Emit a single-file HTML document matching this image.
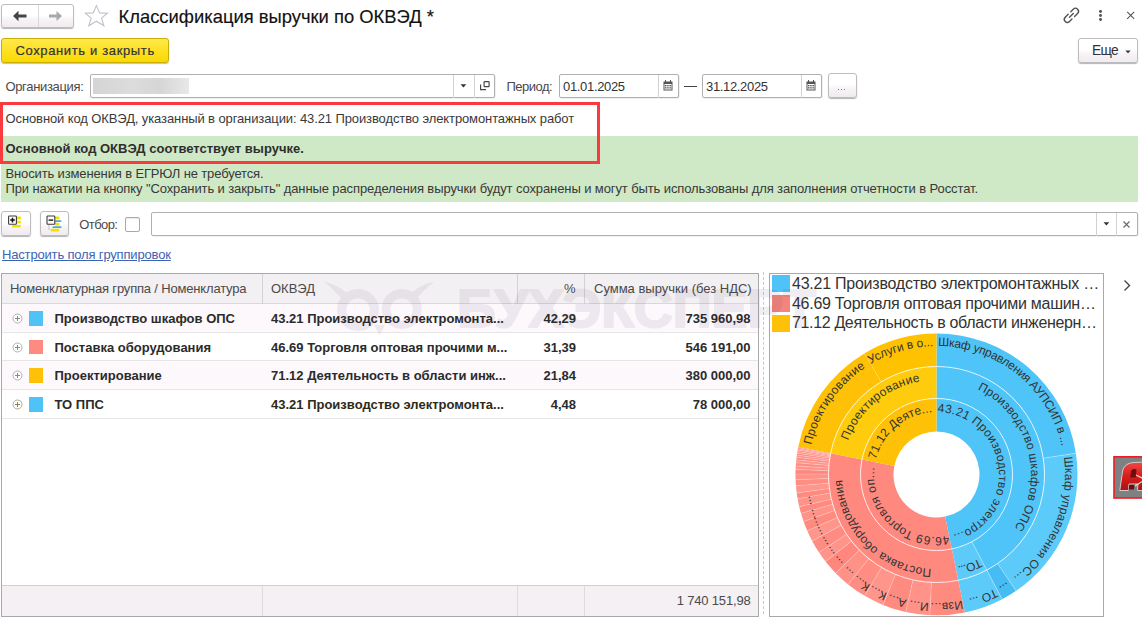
<!DOCTYPE html>
<html><head><meta charset="utf-8">
<style>
*{box-sizing:border-box;margin:0;padding:0}
html,body{width:1142px;height:620px;overflow:hidden;background:#fff;font-family:"Liberation Sans",sans-serif;color:#333;position:relative}
.a{position:absolute}
.btn{position:absolute;border:1px solid #bdbdbd;border-radius:3px;background:linear-gradient(#fff 0%,#fff 45%,#f6f2f6 68%,#efebef 100%);box-shadow:0 1px 1px rgba(0,0,0,.3)}
.inp{position:absolute;border:1px solid #b0b0b0;border-radius:2px;background:#fff;box-shadow:0.5px 0.5px 0.5px rgba(0,0,0,.12)}
.t{position:absolute;white-space:nowrap;font-size:13px;color:#4a4a4a;line-height:1}
.vl{position:absolute;width:1px;background:#d2d2d2}
.hl{position:absolute;height:1px;background:#e0e0e0}
.b{font-weight:bold;color:#2b2b2b}
</style></head><body>

<!-- nav -->
<div class="btn" style="left:1px;top:4px;width:73px;height:23.5px"></div>
<div class="a" style="left:38px;top:5px;width:1px;height:22px;background:#d9d9d9"></div>
<svg class="a" style="left:12px;top:10px" width="16" height="12" viewBox="0 0 16 12"><path d="M1 6 L6.5 0.8 V4.5 H14.5 V7.5 H6.5 V11.2 Z" fill="#444"/></svg>
<svg class="a" style="left:47px;top:10px" width="16" height="12" viewBox="0 0 16 12"><path d="M15 6 L9.5 1 V4.6 H2 V7.4 H9.5 V11 Z" fill="#aaa"/></svg>
<svg class="a" style="left:80px;top:0" width="32" height="32" viewBox="80 0 32 32"><path d="M96.4 5.6 L99.6 12.9 L107.4 13.3 L101.5 18.1 L103.9 25.8 L96.4 21.2 L88.8 25.8 L91.2 18.1 L85.4 13.3 L93.2 12.9 Z" fill="none" stroke="#bcc2ca" stroke-width="1.1" stroke-linejoin="miter"/></svg>
<div class="t" style="left:118.5px;top:8.3px;font-size:18.4px;color:#111;-webkit-text-stroke:0.15px #111">Классификация выручки по ОКВЭД *</div>

<!-- top right icons -->
<svg class="a" style="left:1055px;top:0" width="34" height="30" viewBox="-16.4 -15.4 34 30"><g transform="rotate(-45) scale(0.84)" fill="none" stroke="#505050" stroke-width="1.6" stroke-linecap="round"><path d="M-1.8 -3.6 H-6.8 A3.6 3.6 0 0 0 -6.8 3.6 H-2.6"/><path d="M1.8 3.6 H6.8 A3.6 3.6 0 0 0 6.8 -3.6 H2.6"/><path d="M-3.2 0 H3.2"/></g></svg>
<div class="a" style="left:1099.4px;top:9.8px;width:2.8px;height:2.8px;background:#555;border-radius:50%"></div>
<div class="a" style="left:1099.4px;top:13.8px;width:2.8px;height:2.8px;background:#555;border-radius:50%"></div>
<div class="a" style="left:1099.4px;top:17.9px;width:2.8px;height:2.8px;background:#555;border-radius:50%"></div>
<svg class="a" style="left:1125px;top:10px" width="12" height="12" viewBox="0 0 12 12"><path d="M2.2 1.8 L9.2 8.8 M9.2 1.8 L2.2 8.8" stroke="#555" stroke-width="1.05"/></svg>

<!-- save button -->
<div class="a" style="left:1px;top:38px;width:168px;height:25px;border:1px solid #c9ae05;border-radius:3px;background:linear-gradient(#ffe94a,#fad900);box-shadow:0 1px 1px rgba(0,0,0,.25)"></div>
<div class="t" style="left:15.4px;top:44.3px;font-size:13px;letter-spacing:0.64px;color:#33333d;-webkit-text-stroke:0.2px #33333d">Сохранить и закрыть</div>

<!-- Еще -->
<div class="btn" style="left:1078px;top:37.8px;width:60px;height:25px"></div>
<div class="t" style="left:1092px;top:43.8px;font-size:13.8px;letter-spacing:-0.75px;color:#333">Еще</div>
<svg class="a" style="left:1125px;top:50px" width="6" height="4"><path d="M0.3 0.5 H5.7 L3 3.2 Z" fill="#333"/></svg>

<!-- organization row -->
<div class="t" style="left:5.4px;top:80px;font-size:13px;letter-spacing:-0.32px">Организация:</div>
<div class="inp" style="left:90px;top:74.2px;width:405px;height:24.3px"></div>
<div class="a" style="left:93px;top:78px;width:96px;height:16px;background:linear-gradient(90deg,#d4d4d4,#dcdcdc 40%,#d6d6d6 70%,#e8e8e8)"></div>
<div class="vl" style="left:453px;top:75px;height:23px"></div>
<div class="vl" style="left:474px;top:75px;height:23px"></div>
<svg class="a" style="left:460px;top:84px" width="7" height="4"><path d="M0.5 0.3 H6.3 L3.4 3.4 Z" fill="#333"/></svg>
<svg class="a" style="left:476px;top:76px" width="18" height="18" viewBox="476 76 18 18"><g fill="none" stroke="#444" stroke-width="1.15"><rect x="484.1" y="81.6" width="5" height="5" rx="0.6"/><path d="M480.6 84.6 V89.6 H486"/></g></svg>

<div class="t" style="left:506.4px;top:80px;font-size:13px;letter-spacing:-0.48px">Период:</div>
<div class="inp" style="left:559px;top:74.2px;width:120px;height:24.3px"></div>
<div class="vl" style="left:658px;top:75px;height:23px"></div>
<div class="t" style="left:563.1px;top:80px;font-size:13px;color:#333;letter-spacing:-0.35px">01.01.2025</div>
<svg class="a" style="left:663px;top:80px" width="10" height="11" viewBox="0 0 10 11"><rect x="0.5" y="1.5" width="9" height="9" fill="#555"/><rect x="1.5" y="4" width="7" height="5.5" fill="#fff"/><g fill="#555"><rect x="2" y="5" width="1.5" height="1.3"/><rect x="4.2" y="5" width="1.5" height="1.3"/><rect x="6.4" y="5" width="1.5" height="1.3"/><rect x="2" y="7.2" width="1.5" height="1.3"/><rect x="4.2" y="7.2" width="1.5" height="1.3"/><rect x="6.4" y="7.2" width="1.5" height="1.3"/><rect x="2" y="0" width="1" height="2"/><rect x="7" y="0" width="1" height="2"/></g></svg>
<div class="a" style="left:684px;top:86px;width:13px;height:1.3px;background:#444"></div>
<div class="inp" style="left:702px;top:74.2px;width:120px;height:24.3px"></div>
<div class="vl" style="left:801px;top:75px;height:23px"></div>
<div class="t" style="left:706px;top:80px;font-size:13px;color:#333;letter-spacing:-0.34px">31.12.2025</div>
<svg class="a" style="left:806px;top:80px" width="10" height="11" viewBox="0 0 10 11"><rect x="0.5" y="1.5" width="9" height="9" fill="#555"/><rect x="1.5" y="4" width="7" height="5.5" fill="#fff"/><g fill="#555"><rect x="2" y="5" width="1.5" height="1.3"/><rect x="4.2" y="5" width="1.5" height="1.3"/><rect x="6.4" y="5" width="1.5" height="1.3"/><rect x="2" y="7.2" width="1.5" height="1.3"/><rect x="4.2" y="7.2" width="1.5" height="1.3"/><rect x="6.4" y="7.2" width="1.5" height="1.3"/><rect x="2" y="0" width="1" height="2"/><rect x="7" y="0" width="1" height="2"/></g></svg>
<div class="btn" style="left:828px;top:73.3px;width:29px;height:24.5px"></div>
<div class="a" style="left:837.7px;top:88.8px;width:1.6px;height:1.4px;background:#777"></div><div class="a" style="left:840.8px;top:88.8px;width:1.6px;height:1.4px;background:#777"></div><div class="a" style="left:843.9px;top:88.8px;width:1.6px;height:1.4px;background:#777"></div>

<!-- green info -->
<div class="a" style="left:1px;top:135.5px;width:1137px;height:66px;background:#cfe8c6"></div>
<div class="a" style="left:0px;top:102px;width:600px;height:62px;border:3px solid #f93a3e"></div>
<div class="t" style="left:5.5px;top:111.8px;font-size:13px;color:#3a3a3a;letter-spacing:-0.107px">Основной код ОКВЭД, указанный в организации: 43.21 Производство электромонтажных работ</div>
<div class="t b" style="left:5.5px;top:142.3px;font-size:13px;color:#2e2e2e">Основной код ОКВЭД соответствует выручке.</div>
<div class="t" style="left:5.5px;top:167px;font-size:13px;color:#383838;letter-spacing:-0.135px">Вносить изменения в ЕГРЮЛ не требуется.</div>
<div class="t" style="left:5.5px;top:182.4px;font-size:13px;color:#383838;letter-spacing:-0.104px">При нажатии на кнопку "Сохранить и закрыть" данные распределения выручки будут сохранены и могут быть использованы для заполнения отчетности в Росстат.</div>

<!-- toolbar -->
<div class="btn" style="left:1px;top:211px;width:30px;height:25px"></div>
<svg class="a" style="left:0;top:208px" width="30" height="30" viewBox="0 208 30 30"><g fill="#f2e200"><rect x="16.5" y="216.6" width="4.5" height="2.6" rx="1"/><rect x="16.5" y="220.7" width="4.5" height="2.6" rx="1"/><rect x="12" y="225" width="9" height="2.6" rx="1"/></g><rect x="8.6" y="216" width="7.8" height="8.2" rx="0.8" fill="#fff" stroke="#3a3a3a" stroke-width="1.1"/><path d="M10.2 220.1 H14.8 M12.5 217.8 V222.4" stroke="#111" stroke-width="1.5"/></svg>
<div class="btn" style="left:39.5px;top:211px;width:29.5px;height:25px"></div>
<svg class="a" style="left:38px;top:208px" width="30" height="30" viewBox="38 208 30 30"><g fill="#f2e200"><rect x="55" y="216.6" width="4.5" height="2.6" rx="1"/><rect x="55" y="222.8" width="4.5" height="2.6" rx="1"/><rect x="50.5" y="228.8" width="8.8" height="2.6" rx="1"/></g><g fill="#4aa8e8"><rect x="55" y="220.2" width="6.5" height="1.8" rx="0.8"/><rect x="52.5" y="226.2" width="9" height="1.8" rx="0.8"/></g><path d="M49 224.5 V230" stroke="#999" stroke-width="1" stroke-dasharray="1 1"/><rect x="47" y="216" width="7.8" height="8.2" rx="0.8" fill="#fff" stroke="#3a3a3a" stroke-width="1.1"/><path d="M48.6 220.1 H53.2" stroke="#222" stroke-width="1.5"/></svg>
<div class="t" style="left:79.3px;top:217.5px;font-size:13px;letter-spacing:-0.58px">Отбор:</div>
<div class="a" style="left:124.5px;top:216.5px;width:15px;height:15px;border:1px solid #aaa;border-radius:2px;background:#fff;box-shadow:inset 0 1px 1px rgba(0,0,0,.08)"></div>
<div class="inp" style="left:150.5px;top:211.8px;width:987px;height:24px"></div>
<div class="vl" style="left:1096px;top:213px;height:22.5px"></div>
<div class="vl" style="left:1116px;top:213px;height:22.5px"></div>
<svg class="a" style="left:1103px;top:222px" width="7" height="4"><path d="M0.5 0.3 H6.3 L3.4 3.4 Z" fill="#333"/></svg>
<svg class="a" style="left:1122px;top:219.5px" width="9" height="9" viewBox="0 0 9 9"><path d="M1.5 1.5 L7.5 7.5 M7.5 1.5 L1.5 7.5" stroke="#666" stroke-width="1.1"/></svg>

<div class="t" style="left:2px;top:248.3px;font-size:13px;color:#3c64b4;text-decoration:underline;letter-spacing:-0.17px">Настроить поля группировок</div>

<!-- table -->
<div class="a" style="left:1px;top:273px;width:758px;height:344px;border:1px solid #a9a9a9;background:#fff;overflow:hidden">
  <div class="a" style="left:0;top:0;width:756px;height:29.5px;background:#f3f0f3;border-bottom:1px solid #d8d8d8"></div>
  <div class="a" style="left:0;top:30px;width:756px;height:28.7px;background:#fcf8fc;border-bottom:1px solid #e6e6e6"></div>
  <div class="a" style="left:0;top:58.7px;width:756px;height:28.7px;background:#fff;border-bottom:1px solid #e6e6e6"></div>
  <div class="a" style="left:0;top:87.4px;width:756px;height:28.7px;background:#fcf8fc;border-bottom:1px solid #e6e6e6"></div>
  <div class="a" style="left:0;top:116.1px;width:756px;height:28.7px;background:#fff;border-bottom:1px solid #e6e6e6"></div>
  <div class="a" style="left:0;top:311.3px;width:756px;height:31px;background:#f4f0f4;border-top:1px solid #d0d0d0"></div>
  <div class="vl" style="left:260px;top:0;height:29.5px"></div>
  <div class="vl" style="left:515px;top:0;height:29.5px"></div>
  <div class="vl" style="left:582px;top:0;height:29.5px"></div>
  <div class="vl" style="left:260px;top:312px;height:31px;background:#dcdcdc"></div>
  <div class="vl" style="left:515px;top:312px;height:31px;background:#dcdcdc"></div>
  <div class="vl" style="left:582px;top:312px;height:31px;background:#dcdcdc"></div>
</div>
<!-- watermark -->


<div class="t" style="left:9.9px;top:281.5px;font-size:13px;letter-spacing:-0.175px">Номенклатурная группа / Номенклатура</div>
<div class="t" style="left:271px;top:281.5px;font-size:13px">ОКВЭД</div>
<div class="t" style="left:564px;top:281.5px;font-size:13px">%</div>
<div class="t" style="left:594px;top:281.5px;font-size:13px">Сумма выручки (без НДС)</div>

<!-- rows -->
<svg class="a" style="left:12px;top:313px" width="11" height="11" viewBox="0 0 11 11"><circle cx="5.5" cy="5.5" r="4.5" fill="#fff" stroke="#b0b0b0" stroke-width="1"/><path d="M3 5.5 H8 M5.5 3 V8" stroke="#888" stroke-width="1"/></svg>
<div class="a" style="left:29.2px;top:311px;width:14px;height:14.5px;background:#4fc3f7"></div>
<div class="t b" style="left:54.5px;top:312px;font-size:13px">Производство шкафов ОПС</div>
<div class="t b" style="left:271px;top:312px;font-size:13px">43.21 Производство электромонта...</div>
<div class="t b" style="left:524px;top:312px;width:52px;text-align:right;font-size:13px">42,29</div>
<div class="t b" style="left:600px;top:312px;width:150.5px;text-align:right;font-size:13px">735 960,98</div>

<svg class="a" style="left:12px;top:341.7px" width="11" height="11" viewBox="0 0 11 11"><circle cx="5.5" cy="5.5" r="4.5" fill="#fff" stroke="#b0b0b0" stroke-width="1"/><path d="M3 5.5 H8 M5.5 3 V8" stroke="#888" stroke-width="1"/></svg>
<div class="a" style="left:29.2px;top:339.7px;width:14px;height:14.5px;background:#ff8a80"></div>
<div class="t b" style="left:54.5px;top:340.7px;font-size:13px">Поставка оборудования</div>
<div class="t b" style="left:271px;top:340.7px;font-size:13px">46.69 Торговля оптовая прочими м...</div>
<div class="t b" style="left:524px;top:340.7px;width:52px;text-align:right;font-size:13px">31,39</div>
<div class="t b" style="left:600px;top:340.7px;width:150.5px;text-align:right;font-size:13px">546 191,00</div>

<svg class="a" style="left:12px;top:370.4px" width="11" height="11" viewBox="0 0 11 11"><circle cx="5.5" cy="5.5" r="4.5" fill="#fff" stroke="#b0b0b0" stroke-width="1"/><path d="M3 5.5 H8 M5.5 3 V8" stroke="#888" stroke-width="1"/></svg>
<div class="a" style="left:29.2px;top:368.4px;width:14px;height:14.5px;background:#ffc107"></div>
<div class="t b" style="left:54.5px;top:369.4px;font-size:13px">Проектирование</div>
<div class="t b" style="left:271px;top:369.4px;font-size:13px">71.12 Деятельность в области инж...</div>
<div class="t b" style="left:524px;top:369.4px;width:52px;text-align:right;font-size:13px">21,84</div>
<div class="t b" style="left:600px;top:369.4px;width:150.5px;text-align:right;font-size:13px">380 000,00</div>

<svg class="a" style="left:12px;top:399.1px" width="11" height="11" viewBox="0 0 11 11"><circle cx="5.5" cy="5.5" r="4.5" fill="#fff" stroke="#b0a890" stroke-width="1"/><path d="M3 5.5 H8 M5.5 3 V8" stroke="#8a8060" stroke-width="1"/></svg>
<div class="a" style="left:29.2px;top:397.1px;width:14px;height:14.5px;background:#4fc3f7"></div>
<div class="t b" style="left:54.5px;top:398.1px;font-size:13px">ТО ППС</div>
<div class="t b" style="left:271px;top:398.1px;font-size:13px;color:#2e2a1a">43.21 Производство электромонта...</div>
<div class="t b" style="left:524px;top:398.1px;width:52px;text-align:right;font-size:13px">4,48</div>
<div class="t b" style="left:600px;top:398.1px;width:150.5px;text-align:right;font-size:13px">78 000,00</div>

<div class="t" style="left:600px;top:594px;width:150.5px;text-align:right;font-size:13px;letter-spacing:-0.175px">1 740 151,98</div>

<!-- splitter -->
<div class="a" style="left:763px;top:272px;width:1px;height:342px;border-left:1px dashed #c8c8c8"></div>

<!-- chart box -->
<div class="a" style="left:769px;top:272.5px;width:335px;height:344px;border:1px solid #a9a9a9;background:#fff"></div>
<div class="a" style="left:772px;top:275px;width:17.5px;height:17.3px;background:#4fc3f7"></div>
<div class="a" style="left:772px;top:295px;width:17.5px;height:17.3px;background:#f3857c"></div>
<div class="a" style="left:772px;top:314.6px;width:17.5px;height:17.3px;background:#ffc107"></div>
<div class="t" style="left:792px;top:276.3px;font-size:16px;color:#333;letter-spacing:-0.24px">43.21 Производство электромонтажных …</div>
<div class="t" style="left:792px;top:295.6px;font-size:16px;color:#333;letter-spacing:-0.28px">46.69 Торговля оптовая прочими машин…</div>
<div class="t" style="left:792px;top:315.4px;font-size:16px;color:#333;letter-spacing:-0.35px">71.12 Деятельность в области инженерн…</div>
<svg class="a" style="left:1122px;top:279px" width="10" height="13" viewBox="0 0 10 13"><path d="M2.5 1.5 L7.5 6.5 L2.5 11.5" fill="none" stroke="#444" stroke-width="1.4"/></svg>

<!-- red app icon -->
<svg class="a" style="left:1108px;top:450px" width="34" height="55" viewBox="1108 450 34 55">
<defs><linearGradient id="rg" x1="0" y1="0" x2="0" y2="1"><stop offset="0" stop-color="#f04848"/><stop offset="0.5" stop-color="#d81c1c"/><stop offset="1" stop-color="#b01010"/></linearGradient></defs>
<rect x="1114" y="456.8" width="40" height="41.2" fill="#7d8181" stroke="#ee1b22" stroke-width="1.6"/>
<path d="M1119.8 490.5 L1122.6 471 C1123.8 465.5 1128 463 1134 462.5 L1145 462 L1145 490.5 L1137.5 490.5 L1138 484 L1129 484 L1128.3 490.5 Z" fill="url(#rg)" stroke="#d8d8d8" stroke-width="0.9"/>
<path d="M1130.2 477.5 L1131 471.5 C1131.5 469.5 1133 469 1135 469 L1136.5 469.5 L1135.8 477.5 Z" fill="#6e0d10"/>
<path d="M1128.6 489.6 L1129.2 484.8 L1134.5 484.8 L1134 489.6 Z" fill="#6e0d10"/>
<path d="M1136 475 L1143 478.5 M1135 486 L1143 481" stroke="#e0e0e0" stroke-width="1.2"/>
</svg>
<svg class="a" style="left:0;top:0" width="1142" height="620" viewBox="0 0 1142 620">
<defs><clipPath id="cb"><rect x="770" y="273.5" width="333" height="342"/></clipPath><path id="p1" d="M919.47 414.37 A62.5 62.5 0 0 1 998.68 468.17 A62.5 62.5 0 0 1 931.94 536.83"/><path id="p2" d="M987.78 510.23 A62.5 62.5 0 0 1 892.41 518.79 A62.5 62.5 0 0 1 900.54 423.38"/><path id="p3" d="M895.76 521.89 A62.5 62.5 0 0 1 896.90 426.15 A62.5 62.5 0 0 1 991.00 443.90"/><path id="p4" d="M898.24 388.09 A94.5 94.5 0 0 1 1028.24 451.83 A94.5 94.5 0 0 1 942.89 568.78"/><path id="p5" d="M1018.59 427.69 A94.5 94.5 0 0 1 968.35 563.47 A94.5 94.5 0 0 1 843.35 490.41"/><path id="p6" d="M1014.03 528.53 A94.5 94.5 0 0 1 869.83 541.47 A94.5 94.5 0 0 1 882.12 397.21"/><path id="p7" d="M874.90 546.16 A94.5 94.5 0 0 1 876.63 401.39 A94.5 94.5 0 0 1 1018.90 428.23"/><path id="p8" d="M825.95 408.99 A128.5 128.5 0 0 1 1020.21 377.01 A128.5 128.5 0 0 1 1017.98 573.87"/><path id="p9" d="M966.39 349.52 A128.5 128.5 0 0 1 1054.39 525.64 A128.5 128.5 0 0 1 865.67 581.72"/><path id="p10" d="M1033.36 390.06 A128.5 128.5 0 0 1 1002.84 584.55 A128.5 128.5 0 0 1 816.60 520.72"/><path id="p11" d="M1048.12 410.84 A128.5 128.5 0 0 1 979.81 595.48 A128.5 128.5 0 0 1 809.84 496.14"/><path id="p12" d="M1060.93 442.40 A128.5 128.5 0 0 1 946.50 602.61 A128.5 128.5 0 0 1 808.60 462.11"/><path id="p13" d="M1064.89 469.23 A128.5 128.5 0 0 1 919.39 601.86 A128.5 128.5 0 0 1 814.05 435.54"/><path id="p14" d="M1063.92 491.16 A128.5 128.5 0 0 1 897.97 597.09 A128.5 128.5 0 0 1 822.47 415.26"/><path id="p15" d="M1059.74 510.89 A128.5 128.5 0 0 1 879.26 589.55 A128.5 128.5 0 0 1 833.14 398.16"/><path id="p16" d="M1053.24 528.20 A128.5 128.5 0 0 1 863.35 580.15 A128.5 128.5 0 0 1 845.16 384.11"/><path id="p17" d="M1045.24 542.97 A128.5 128.5 0 0 1 850.18 569.69 A128.5 128.5 0 0 1 857.74 372.97"/><path id="p18" d="M1036.72 554.93 A128.5 128.5 0 0 1 839.89 559.23 A128.5 128.5 0 0 1 869.84 364.64"/><path id="p19" d="M1028.70 564.01 A128.5 128.5 0 0 1 832.34 549.76 A128.5 128.5 0 0 1 880.47 358.86"/><path id="p20" d="M1020.55 571.70 A128.5 128.5 0 0 1 826.18 540.39 A128.5 128.5 0 0 1 890.76 354.41"/><path id="p21" d="M1011.67 578.72 A128.5 128.5 0 0 1 820.81 530.43 A128.5 128.5 0 0 1 901.51 350.85"/><path id="p22" d="M1003.64 584.06 A128.5 128.5 0 0 1 816.94 521.60 A128.5 128.5 0 0 1 910.88 348.58"/><path id="p23" d="M996.33 588.22 A128.5 128.5 0 0 1 814.12 513.68 A128.5 128.5 0 0 1 919.17 347.17"/><path id="p24" d="M983.70 594.02 A128.5 128.5 0 0 1 810.60 500.23 A128.5 128.5 0 0 1 933.02 346.05"/><path id="p25" d="M881.61 590.69 A128.5 128.5 0 0 1 831.61 400.27 A128.5 128.5 0 0 1 1027.81 384.09"/><path id="p26" d="M820.42 529.62 A128.5 128.5 0 0 1 902.38 350.61 A128.5 128.5 0 0 1 1064.43 462.41"/></defs>
<g clip-path="url(#cb)">
<path d="M936.50 398.50 A76 76 0 0 1 951.82 548.94 L945.17 516.62 A43 43 0 0 0 936.50 431.50 Z" fill="#4fc4f8" /><path d="M951.82 548.94 A76 76 0 0 1 861.99 459.52 L894.34 466.02 A43 43 0 0 0 945.17 516.62 Z" fill="#ff897f" /><path d="M861.99 459.52 A76 76 0 0 1 936.50 398.50 L936.50 431.50 A43 43 0 0 0 894.34 466.02 Z" fill="#ffc107" /><path d="M936.50 366.50 A108 108 0 0 1 986.80 570.07 L971.90 541.75 A76 76 0 0 0 936.50 398.50 Z" fill="#4fc4f8" /><path d="M986.80 570.07 A108 108 0 0 1 958.27 580.28 L951.82 548.94 A76 76 0 0 0 971.90 541.75 Z" fill="#5ccbfa" /><path d="M958.27 580.28 A108 108 0 0 1 830.62 453.21 L861.99 459.52 A76 76 0 0 0 951.82 548.94 Z" fill="#ff897f" /><path d="M830.62 453.21 A108 108 0 0 1 936.50 366.50 L936.50 398.50 A76 76 0 0 0 861.99 459.52 Z" fill="#ffcc0d" /><line x1="971.90" y1="541.75" x2="986.80" y2="570.07" stroke="rgba(255,255,255,0.3)" stroke-width="1"/><path d="M936.50 333.50 A141 141 0 0 1 1075.88 453.17 L1043.26 458.16 A108 108 0 0 0 936.50 366.50 Z" fill="#4fc4f8" /><path d="M1075.88 453.17 A141 141 0 0 1 1016.16 590.84 L997.52 563.61 A108 108 0 0 0 1043.26 458.16 Z" fill="#5ccbfa" /><path d="M1016.16 590.84 A141 141 0 0 1 1002.17 599.27 L986.80 570.07 A108 108 0 0 0 997.52 563.61 Z" fill="#47bcf2" /><path d="M1002.17 599.27 A141 141 0 0 1 964.92 612.61 L958.27 580.28 A108 108 0 0 0 986.80 570.07 Z" fill="#5ccbfa" /><line x1="1043.26" y1="458.16" x2="1075.88" y2="453.17" stroke="rgba(255,255,255,0.3)" stroke-width="1"/><line x1="997.52" y1="563.61" x2="1016.16" y2="590.84" stroke="rgba(255,255,255,0.3)" stroke-width="1"/><line x1="986.80" y1="570.07" x2="1002.17" y2="599.27" stroke="rgba(255,255,255,0.3)" stroke-width="1"/><path d="M964.92 612.61 A141 141 0 0 1 929.86 615.34 L931.41 582.38 A108 108 0 0 0 958.27 580.28 Z" fill="#ff8b80" /><path d="M929.86 615.34 A141 141 0 0 1 905.74 612.10 L912.94 579.90 A108 108 0 0 0 931.41 582.38 Z" fill="#ff9389" /><path d="M905.74 612.10 A141 141 0 0 1 883.00 604.95 L895.52 574.42 A108 108 0 0 0 912.94 579.90 Z" fill="#ff8a7f" /><path d="M883.00 604.95 A141 141 0 0 1 864.73 595.86 L881.52 567.46 A108 108 0 0 0 895.52 574.42 Z" fill="#ff958b" /><path d="M864.73 595.86 A141 141 0 0 1 848.15 584.39 L868.83 558.67 A108 108 0 0 0 881.52 567.46 Z" fill="#ff8d83" /><path d="M848.15 584.39 A141 141 0 0 1 835.76 573.15 L859.34 550.06 A108 108 0 0 0 868.83 558.67 Z" fill="#ff9187" /><path d="M835.76 573.15 A141 141 0 0 1 825.54 561.50 L851.51 541.14 A108 108 0 0 0 859.34 550.06 Z" fill="#ff877d" /><path d="M825.54 561.50 A141 141 0 0 1 819.06 552.53 L846.54 534.27 A108 108 0 0 0 851.51 541.14 Z" fill="#ff948a" /><path d="M819.06 552.53 A141 141 0 0 1 812.12 540.91 L841.23 525.37 A108 108 0 0 0 846.54 534.27 Z" fill="#ff8c82" /><path d="M812.12 540.91 A141 141 0 0 1 807.19 530.72 L837.46 517.56 A108 108 0 0 0 841.23 525.37 Z" fill="#ff968c" /><path d="M807.19 530.72 A141 141 0 0 1 803.59 521.57 L834.69 510.55 A108 108 0 0 0 837.46 517.56 Z" fill="#ff8a80" /><path d="M803.59 521.57 A141 141 0 0 1 800.96 513.36 L832.68 504.27 A108 108 0 0 0 834.69 510.55 Z" fill="#ff9389" /><path d="M800.96 513.36 A141 141 0 0 1 799.23 506.70 L831.35 499.16 A108 108 0 0 0 832.68 504.27 Z" fill="#ff8b80" /><path d="M799.23 506.70 A141 141 0 0 1 797.60 498.74 L830.11 493.07 A108 108 0 0 0 831.35 499.16 Z" fill="#ff9389" /><path d="M797.60 498.74 A141 141 0 0 1 796.71 492.90 L829.42 488.60 A108 108 0 0 0 830.11 493.07 Z" fill="#ff8a7f" /><path d="M796.71 492.90 A141 141 0 0 1 795.95 485.81 L828.85 483.16 A108 108 0 0 0 829.42 488.60 Z" fill="#ff958b" /><path d="M795.95 485.81 A141 141 0 0 1 795.59 479.67 L828.57 478.46 A108 108 0 0 0 828.85 483.16 Z" fill="#ff8d83" /><path d="M795.59 479.67 A141 141 0 0 1 795.50 474.01 L828.50 474.12 A108 108 0 0 0 828.57 478.46 Z" fill="#ff9187" /><path d="M795.50 474.01 A141 141 0 0 1 795.59 469.58 L828.57 470.73 A108 108 0 0 0 828.50 474.12 Z" fill="#ff877d" /><path d="M795.59 469.58 A141 141 0 0 1 795.76 465.89 L828.70 467.91 A108 108 0 0 0 828.57 470.73 Z" fill="#ff948a" /><path d="M795.76 465.89 A141 141 0 0 1 795.99 462.70 L828.88 465.46 A108 108 0 0 0 828.70 467.91 Z" fill="#ff8c82" /><path d="M795.99 462.70 A141 141 0 0 1 796.27 459.76 L829.09 463.21 A108 108 0 0 0 828.88 465.46 Z" fill="#ff968c" /><path d="M796.27 459.76 A141 141 0 0 1 796.55 457.32 L829.31 461.34 A108 108 0 0 0 829.09 463.21 Z" fill="#ff8a80" /><path d="M796.55 457.32 A141 141 0 0 1 796.84 455.12 L829.52 459.66 A108 108 0 0 0 829.31 461.34 Z" fill="#ff9389" /><path d="M796.84 455.12 A141 141 0 0 1 797.12 453.17 L829.74 458.16 A108 108 0 0 0 829.52 459.66 Z" fill="#ff8b80" /><path d="M797.12 453.17 A141 141 0 0 1 797.39 451.47 L829.95 456.86 A108 108 0 0 0 829.74 458.16 Z" fill="#ff9389" /><path d="M797.39 451.47 A141 141 0 0 1 797.64 450.02 L830.14 455.75 A108 108 0 0 0 829.95 456.86 Z" fill="#ff8a7f" /><path d="M797.64 450.02 A141 141 0 0 1 797.86 448.80 L830.31 454.82 A108 108 0 0 0 830.14 455.75 Z" fill="#ff958b" /><path d="M797.86 448.80 A141 141 0 0 1 798.09 447.60 L830.48 453.89 A108 108 0 0 0 830.31 454.82 Z" fill="#ff8d83" /><path d="M798.09 447.60 A141 141 0 0 1 798.27 446.70 L830.62 453.21 A108 108 0 0 0 830.48 453.89 Z" fill="#ff9187" /><line x1="931.41" y1="582.38" x2="929.86" y2="615.34" stroke="rgba(255,255,255,0.22)" stroke-width="1"/><line x1="912.94" y1="579.90" x2="905.74" y2="612.10" stroke="rgba(255,255,255,0.22)" stroke-width="1"/><line x1="895.52" y1="574.42" x2="883.00" y2="604.95" stroke="rgba(255,255,255,0.22)" stroke-width="1"/><line x1="881.52" y1="567.46" x2="864.73" y2="595.86" stroke="rgba(255,255,255,0.22)" stroke-width="1"/><line x1="868.83" y1="558.67" x2="848.15" y2="584.39" stroke="rgba(255,255,255,0.22)" stroke-width="1"/><line x1="859.34" y1="550.06" x2="835.76" y2="573.15" stroke="rgba(255,255,255,0.22)" stroke-width="1"/><line x1="851.51" y1="541.14" x2="825.54" y2="561.50" stroke="rgba(255,255,255,0.22)" stroke-width="1"/><line x1="846.54" y1="534.27" x2="819.06" y2="552.53" stroke="rgba(255,255,255,0.22)" stroke-width="1"/><line x1="841.23" y1="525.37" x2="812.12" y2="540.91" stroke="rgba(255,255,255,0.22)" stroke-width="1"/><line x1="837.46" y1="517.56" x2="807.19" y2="530.72" stroke="rgba(255,255,255,0.22)" stroke-width="1"/><line x1="834.69" y1="510.55" x2="803.59" y2="521.57" stroke="rgba(255,255,255,0.22)" stroke-width="1"/><line x1="832.68" y1="504.27" x2="800.96" y2="513.36" stroke="rgba(255,255,255,0.22)" stroke-width="1"/><line x1="831.35" y1="499.16" x2="799.23" y2="506.70" stroke="rgba(255,255,255,0.22)" stroke-width="1"/><line x1="830.11" y1="493.07" x2="797.60" y2="498.74" stroke="rgba(255,255,255,0.22)" stroke-width="1"/><line x1="829.42" y1="488.60" x2="796.71" y2="492.90" stroke="rgba(255,255,255,0.22)" stroke-width="1"/><line x1="828.85" y1="483.16" x2="795.95" y2="485.81" stroke="rgba(255,255,255,0.22)" stroke-width="1"/><line x1="828.57" y1="478.46" x2="795.59" y2="479.67" stroke="rgba(255,255,255,0.22)" stroke-width="1"/><line x1="828.50" y1="474.12" x2="795.50" y2="474.01" stroke="rgba(255,255,255,0.22)" stroke-width="1"/><line x1="828.57" y1="470.73" x2="795.59" y2="469.58" stroke="rgba(255,255,255,0.22)" stroke-width="1"/><line x1="828.70" y1="467.91" x2="795.76" y2="465.89" stroke="rgba(255,255,255,0.22)" stroke-width="1"/><line x1="828.88" y1="465.46" x2="795.99" y2="462.70" stroke="rgba(255,255,255,0.22)" stroke-width="1"/><line x1="829.09" y1="463.21" x2="796.27" y2="459.76" stroke="rgba(255,255,255,0.22)" stroke-width="1"/><line x1="829.31" y1="461.34" x2="796.55" y2="457.32" stroke="rgba(255,255,255,0.22)" stroke-width="1"/><line x1="829.52" y1="459.66" x2="796.84" y2="455.12" stroke="rgba(255,255,255,0.22)" stroke-width="1"/><line x1="829.74" y1="458.16" x2="797.12" y2="453.17" stroke="rgba(255,255,255,0.22)" stroke-width="1"/><line x1="829.95" y1="456.86" x2="797.39" y2="451.47" stroke="rgba(255,255,255,0.22)" stroke-width="1"/><line x1="830.14" y1="455.75" x2="797.64" y2="450.02" stroke="rgba(255,255,255,0.22)" stroke-width="1"/><line x1="830.31" y1="454.82" x2="797.86" y2="448.80" stroke="rgba(255,255,255,0.22)" stroke-width="1"/><line x1="830.48" y1="453.89" x2="798.09" y2="447.60" stroke="rgba(255,255,255,0.22)" stroke-width="1"/><path d="M798.27 446.70 A141 141 0 0 1 864.30 353.39 L881.20 381.73 A108 108 0 0 0 830.62 453.21 Z" fill="#ffc107" /><path d="M864.30 353.39 A141 141 0 0 1 936.50 333.50 L936.50 366.50 A108 108 0 0 0 881.20 381.73 Z" fill="#ffc200" /><line x1="881.20" y1="381.73" x2="864.30" y2="353.39" stroke="rgba(255,255,255,0.15)" stroke-width="1"/><circle cx="936.5" cy="474.5" r="76" fill="none" stroke="rgba(255,255,255,0.75)" stroke-width="1"/><circle cx="936.5" cy="474.5" r="108" fill="none" stroke="rgba(255,255,255,0.75)" stroke-width="1"/>
<g fill="#333" font-family="Liberation Sans, sans-serif"><text font-size="12"><textPath href="#p1" startOffset="18.23" textLength="178.02" lengthAdjust="spacing">43.21 Производство электро...</textPath></text><text font-size="12"><textPath href="#p2" startOffset="47.70" textLength="117.48" lengthAdjust="spacing">46.69 Торговля оп...</textPath></text><text font-size="12"><textPath href="#p3" startOffset="68.74" textLength="78.76" lengthAdjust="spacing">71.12 Деяте...</textPath></text><text font-size="12"><textPath href="#p4" startOffset="81.61" textLength="163.12" lengthAdjust="spacing">Производство шкафов ОПС</textPath></text><text font-size="12"><textPath href="#p5" startOffset="152.72" textLength="23.59" lengthAdjust="spacing">ТО...</textPath></text><text font-size="12"><textPath href="#p6" startOffset="95.88" textLength="138.05" lengthAdjust="spacing">Поставка оборудования</textPath></text><text font-size="12"><textPath href="#p7" startOffset="115.64" textLength="97.48" lengthAdjust="spacing">Проектирование</textPath></text><text font-size="12"><textPath href="#p8" startOffset="134.45" textLength="171.79" lengthAdjust="spacing">Шкаф управления АУПСИП в ...</textPath></text><text font-size="12"><textPath href="#p9" startOffset="153.96" textLength="137.26" lengthAdjust="spacing">Шкаф управления ОС...</textPath></text><text font-size="12" letter-spacing="0"><textPath href="#p10" startOffset="50%" text-anchor="middle">...</textPath></text><text font-size="12"><textPath href="#p11" startOffset="207.22" textLength="28.48" lengthAdjust="spacing">ТО ...</textPath></text><text font-size="12" letter-spacing="0.25"><textPath href="#p12" startOffset="50%" text-anchor="middle">Изв...</textPath></text><text font-size="12" letter-spacing="0.25"><textPath href="#p13" startOffset="50%" text-anchor="middle">И...</textPath></text><text font-size="12" letter-spacing="0.25"><textPath href="#p14" startOffset="50%" text-anchor="middle">А...</textPath></text><text font-size="12" letter-spacing="0.25"><textPath href="#p15" startOffset="50%" text-anchor="middle">К...</textPath></text><text font-size="12" letter-spacing="0.25"><textPath href="#p16" startOffset="50%" text-anchor="middle">К...</textPath></text><text font-size="12" letter-spacing="0"><textPath href="#p17" startOffset="50%" text-anchor="middle">...</textPath></text><text font-size="12" letter-spacing="0"><textPath href="#p18" startOffset="50%" text-anchor="middle">...</textPath></text><text font-size="12" letter-spacing="0"><textPath href="#p19" startOffset="50%" text-anchor="middle">...</textPath></text><text font-size="12" letter-spacing="0"><textPath href="#p20" startOffset="50%" text-anchor="middle">...</textPath></text><text font-size="12" letter-spacing="0"><textPath href="#p21" startOffset="50%" text-anchor="middle">...</textPath></text><text font-size="12" letter-spacing="0"><textPath href="#p22" startOffset="50%" text-anchor="middle">...</textPath></text><text font-size="12" letter-spacing="0"><textPath href="#p23" startOffset="50%" text-anchor="middle">...</textPath></text><text font-size="12" letter-spacing="0"><textPath href="#p24" startOffset="50%" text-anchor="middle">...</textPath></text><text font-size="12"><textPath href="#p25" startOffset="174.74" textLength="96.89" lengthAdjust="spacing">Проектирование</textPath></text><text font-size="12"><textPath href="#p26" startOffset="189.51" textLength="66.16" lengthAdjust="spacing">Услуги в о...</textPath></text></g>
</g></svg>
<!-- watermark overlay -->
<svg class="a" style="left:0;top:0;pointer-events:none" width="1142" height="620" viewBox="0 0 1142 620">
<g opacity="0.075" fill="#46325a" stroke="none">
<path fill-rule="evenodd" d="M358 289 a21 21 0 1 0 0.01 0 Z M358 298.3 a11.7 11.7 0 1 1 -0.01 0 Z"/>
<path fill-rule="evenodd" d="M401.7 289 a20 20 0 1 0 0.01 0 Z M401.7 298.3 a11.2 11.2 0 1 1 -0.01 0 Z"/>
<path d="M324 282 C334 283 346 291 352 298 L344 302 C338 294 331 287 324 282 Z"/>
<path d="M434 282 C424 283 412 291 406 298 L414 302 C420 294 427 287 434 282 Z"/>
<path d="M374 325 L385 325 L379.5 335 Z"/>
<text x="457" y="327.2" font-family="Liberation Sans, sans-serif" font-weight="bold" font-size="54.5" textLength="359" lengthAdjust="spacingAndGlyphs" stroke="#46325a" stroke-width="2.2" stroke-linejoin="round">БУХЭКСПЕРТ</text>
</g></svg>
</body></html>
